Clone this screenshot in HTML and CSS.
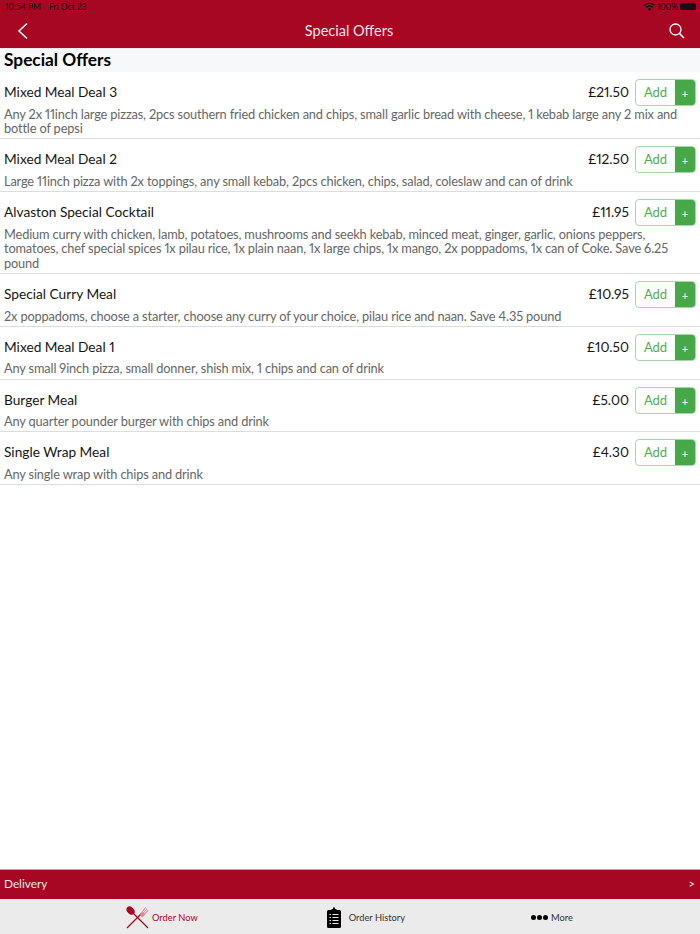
FILE: index.html
```html
<!DOCTYPE html>
<html lang="en">
<head>
    <meta charset="UTF-8">
    <meta name="viewport" content="width=device-width, initial-scale=1.0">
    <title>Special Offers</title>
    <link rel="stylesheet" href="styles.css">
</head>
<body>
    <header class="topbar">
        <div class="status">
            <span class="status-time">10:54 PM</span>
            <span class="status-date">Fri Oct 23</span>
            <span class="status-right">
                <svg class="wifi" width="11" height="8" viewBox="0 0 22 16"><path d="M11 16 7.4 12a5 5 0 0 1 7.2 0zM5.6 10 3.4 7.6a10.700 10.700 0 0 1 15.200 0L16.400 10a7.600 7.600 0 0 0-10.800 0zM1.800 5.900 0 4a15.500 15.500 0 0 1 22 0l-1.800 1.900a13 13 0 0 0-18.400 0z" fill="#111"/></svg>
                <span>100%</span>
                <span class="battery"></span>
            </span>
        </div>
        <div class="nav">
            <svg class="nav-back" width="12" height="18" viewBox="0 0 12 18"><path d="M10 1.500 2 9l8 7.500" fill="none" stroke="#fff" stroke-width="1.500"/></svg>
            <span class="nav-title">Special Offers</span>
            <svg class="nav-search" width="16" height="16" viewBox="0 0 16 16"><circle cx="6.500" cy="6.500" r="5.500" fill="none" stroke="#fff" stroke-width="1.300"/><path d="M10.600 10.600 15 15" stroke="#fff" stroke-width="1.500"/></svg>
        </div>
    </header>

    <main class="content">
        <h2 class="section-title">Special Offers</h2>

        <div class="item">
            <div class="item-top">
                <span class="item-name">Mixed Meal Deal 3</span>
                <span class="item-price">£21.50</span>
                <div class="add"><span class="add-label">Add</span><span class="add-plus">+</span></div>
            </div>
            <p class="item-desc">Any 2x 11inch large pizzas, 2pcs southern fried chicken and chips, small garlic bread with cheese, 1 kebab large any 2 mix and bottle of pepsi</p>
        </div>

        <div class="item">
            <div class="item-top">
                <span class="item-name">Mixed Meal Deal 2</span>
                <span class="item-price">£12.50</span>
                <div class="add"><span class="add-label">Add</span><span class="add-plus">+</span></div>
            </div>
            <p class="item-desc">Large 11inch pizza with 2x toppings, any small kebab, 2pcs chicken, chips, salad, coleslaw and can of drink</p>
        </div>

        <div class="item">
            <div class="item-top">
                <span class="item-name">Alvaston Special Cocktail</span>
                <span class="item-price">£11.95</span>
                <div class="add"><span class="add-label">Add</span><span class="add-plus">+</span></div>
            </div>
            <p class="item-desc">Medium curry with chicken, lamb, potatoes, mushrooms and seekh kebab, minced meat, ginger, garlic, onions peppers, tomatoes, chef special spices 1x pilau rice, 1x plain naan, 1x large chips, 1x mango, 2x poppadoms, 1x can of Coke. Save 6.25 pound</p>
        </div>

        <div class="item">
            <div class="item-top">
                <span class="item-name">Special Curry Meal</span>
                <span class="item-price">£10.95</span>
                <div class="add"><span class="add-label">Add</span><span class="add-plus">+</span></div>
            </div>
            <p class="item-desc">2x poppadoms, choose a starter, choose any curry of your choice, pilau rice and naan. Save 4.35 pound</p>
        </div>

        <div class="item">
            <div class="item-top">
                <span class="item-name">Mixed Meal Deal 1</span>
                <span class="item-price">£10.50</span>
                <div class="add"><span class="add-label">Add</span><span class="add-plus">+</span></div>
            </div>
            <p class="item-desc">Any small 9inch pizza, small donner, shish mix, 1 chips and can of drink</p>
        </div>

        <div class="item">
            <div class="item-top">
                <span class="item-name">Burger Meal</span>
                <span class="item-price">£5.00</span>
                <div class="add"><span class="add-label">Add</span><span class="add-plus">+</span></div>
            </div>
            <p class="item-desc">Any quarter pounder burger with chips and drink</p>
        </div>

        <div class="item">
            <div class="item-top">
                <span class="item-name">Single Wrap Meal</span>
                <span class="item-price">£4.30</span>
                <div class="add"><span class="add-label">Add</span><span class="add-plus">+</span></div>
            </div>
            <p class="item-desc">Any single wrap with chips and drink</p>
        </div>
    </main>

    <div class="delivery">
        <span>Delivery</span>
        <span class="delivery-arrow">&gt;</span>
    </div>

    <nav class="tabs">
        <div class="tab tab-active">
            <svg width="23" height="23" viewBox="0 0 23 23">
                <path d="M1 22 16 7" stroke="#a80723" stroke-width="1.300"/>
                <path d="M22 22 6 6" stroke="#a80723" stroke-width="1.300"/>
                <ellipse cx="4.600" cy="4.600" rx="3.400" ry="4.600" transform="rotate(-45 4.600 4.600)" fill="#a80723"/>
                <path d="M14 8.500 19.500 1l.6.500-3.300 4.600.6.500 3.500-4.400.6.500-3.500 4.400.6.500L22 3.800l.5.600-5 6.100c-1 .6-2 .5-3-.5z" fill="#d98a98"/>
            </svg>
            <span>Order Now</span>
        </div>
        <div class="tab tab-history">
            <svg width="14" height="21" viewBox="0 0 14 21">
                <path d="M1.500 3H4.500V2H6V.5H8V2H9.500V3H12.500Q14 3 14 4.500V19.500Q14 21 12.500 21H1.500Q0 21 0 19.500V4.500Q0 3 1.500 3z" fill="#000"/>
                <path d="M2.500 7.500h1.500M5.500 7.500h6M2.500 10.500h1.500M5.500 10.500h6M2.500 13.500h1.500M5.500 13.500h6M2.500 16.500h1.500M5.500 16.500h6" stroke="#eaeaea" stroke-width="1"/>
            </svg>
            <span>Order History</span>
        </div>
        <div class="tab">
            <span class="dots"><i></i><i></i><i></i></span>
            <span>More</span>
        </div>
    </nav>
</body>
</html>
```

FILE: styles.css
```css
* {
    box-sizing: border-box;
}
body {
    margin: 0;
    height: 934px;
    display: flex;
    flex-direction: column;
    font-family: Lato, "Open Sans", sans-serif;
    font-variant-numeric: proportional-nums;
    background: #fff;
    color: #111;
    overflow: hidden;
}
.topbar {
    height: 49px;
    background: #a80723;
    border-bottom: 1px solid #e8e8ea;
}
.status {
    height: 13px;
    padding: 0 4px 0 5px;
    display: flex;
    align-items: center;
    gap: 8px;
    font-size: 8.500px;
    color: #111;
}
.status-right {
    margin-left: auto;
    display: flex;
    align-items: center;
    gap: 2px;
}
.battery {
    width: 16px;
    height: 7px;
    background: #111;
    border-radius: 1.500px;
}
.nav {
    height: 35px;
    padding: 0 15px 0 17px;
    display: flex;
    align-items: center;
    justify-content: space-between;
}
.nav-title {
    color: #f6e6e9;
    font-size: 14.500px;
}
.section-title {
    margin: 0;
    height: 23px;
    padding: 0 0 2px 4px;
    background: #f7f8fa;
    font-size: 17.300px;
    font-weight: 700;
    line-height: 21px;
    color: #000;
}
.content {
    flex: 1;
}
.item {
    padding: 7px 4px 2.500px;
    border-bottom: 1px solid #ddd;
}
.item-top {
    display: flex;
    align-items: center;
    height: 27px;
}
.item-name {
    flex: 1;
    padding-bottom: 2px;
    font-size: 13.700px;
    color: #151515;
}
.item-price {
    padding-bottom: 2px;
    font-size: 13.700px;
    margin-right: 6px;
    color: #151515;
}
.add {
    width: 61px;
    height: 27px;
    display: flex;
    border: 1px solid #a9d6a9;
    border-radius: 4px;
    overflow: hidden;
}
.add-label {
    flex: 1;
    text-align: center;
    color: #4fae4f;
    font-size: 13px;
    line-height: 25px;
}
.add-plus {
    width: 20px;
    background: #46a846;
    color: #fff;
    text-align: center;
    font-size: 11px;
    line-height: 27px;
}
.item-desc {
    margin: 0;
    padding-top: .5px;
    font-size: 12.800px;
    letter-spacing: -.155px;
    line-height: 14.700px;
    color: #666;
}
.delivery {
    height: 30px;
    padding: 0 5px 2px 4px;
    display: flex;
    justify-content: space-between;
    align-items: center;
    background: #a80723;
    border-top: 1px solid #f0a33c;
    color: #f6e6e9;
    font-size: 11.800px;
}
.delivery-arrow {
    font-size: 11px;
}
.tabs {
    height: 35px;
    padding-left: 126px;
    display: flex;
    align-items: center;
    background: #ebebeb;
    font-size: 9.300px;
    color: #333;
    white-space: nowrap;
}
.tab {
    display: flex;
    align-items: center;
    gap: 3px;
    margin-right: 126px;
    padding-top: 1px;
}
.tab-active {
    color: #a80723;
    margin-right: 129px;
}
.tab-history {
    gap: 8px;
}
.dots {
    display: flex;
    gap: 1px;
}
.dots i {
    width: 5px;
    height: 5px;
    border-radius: 50%;
    background: #000;
}
```
